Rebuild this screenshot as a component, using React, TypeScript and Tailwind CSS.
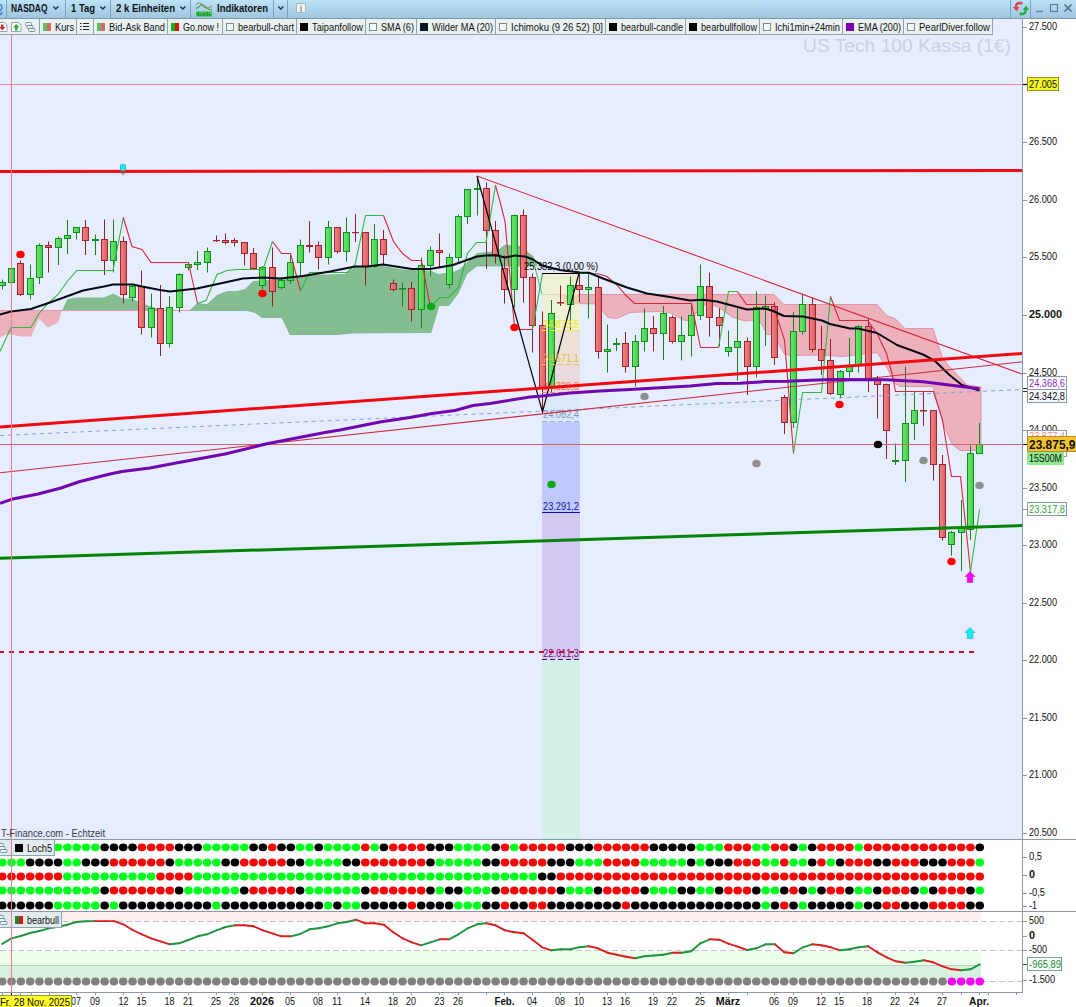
import React from "react";

const FONT = '"Liberation Sans", Arial, sans-serif';
const STEP = 9.31;
const barX = (i: number) => 2.2 + i * STEP;

/* Candles: direction, wick top, body top, body bottom, wick bottom */
type Candle = ["G" | "R", number, number, number, number];
const candles: Candle[] = [
  ["G", 279.5, 282.5, 285.5, 289.5], ["G", 265, 268.5, 282.5, 284.5], ["R", 260.5, 263.5, 294.5, 296],
  ["G", 264.5, 278.5, 294.5, 299.5], ["G", 243.5, 245.5, 277.5, 284], ["R", 241.5, 245.5, 247.5, 272.5],
  ["G", 236.5, 238.5, 247.5, 265], ["G", 220, 235.5, 238.5, 254], ["G", 227.5, 227.5, 232.5, 239.5],
  ["R", 220, 227.5, 240.5, 255], ["G", 234.5, 239.5, 240.5, 255], ["R", 219.5, 239.5, 260.5, 275],
  ["G", 219.5, 241.5, 260.5, 272.5], ["R", 236.5, 241.5, 294.5, 303.5], ["G", 284.5, 286.5, 297.5, 301.5],
  ["R", 270.5, 286.5, 327.5, 334.5], ["G", 293.5, 308.5, 327.5, 337.5], ["R", 285, 308.5, 343.5, 356],
  ["G", 296, 307.5, 343.5, 347.5], ["G", 273.5, 274.5, 307.5, 312.5], ["G", 263.5, 264.5, 267.5, 270.5],
  ["G", 251, 262.5, 264.5, 270], ["G", 247.5, 251.5, 262.5, 272.5], ["R", 235.5, 240.5, 240.5, 242],
  ["R", 233.5, 240.5, 242.5, 244.5], ["R", 238, 240.5, 242.5, 246.5], ["R", 242, 242.5, 253.5, 265.5],
  ["R", 248, 253.5, 268.5, 270], ["G", 266, 267.5, 285.5, 289], ["R", 247.5, 267.5, 291.5, 306.5],
  ["G", 278.5, 280.5, 287.5, 289.5], ["G", 254.5, 262.5, 280.5, 284], ["G", 239.5, 245.5, 262.5, 275.5],
  ["R", 221, 245.5, 246.5, 252.5], ["R", 241.5, 245.5, 257.5, 269.5], ["G", 221, 227.5, 257.5, 264.5],
  ["R", 227.5, 227.5, 251.5, 253.5], ["G", 217.5, 232.5, 251.5, 261.5], ["R", 214, 232.5, 232.5, 242],
  ["R", 232.5, 232.5, 266.5, 285.5], ["G", 224, 239.5, 266.5, 267.5], ["R", 230, 239.5, 254.5, 265],
  ["R", 279.5, 283.5, 289.5, 291.5], ["G", 282.5, 288.5, 289, 306.5], ["R", 282, 288.5, 309.5, 321.5],
  ["G", 257.5, 265.5, 309.5, 328.5], ["G", 246.5, 250.5, 265.5, 276.5], ["R", 233.5, 250.5, 252.5, 267.5],
  ["G", 253.5, 257.5, 284.5, 288.5], ["G", 214.5, 216.5, 257.5, 263.5], ["G", 189.5, 189.5, 216.5, 224],
  ["G", 176, 188.5, 189.5, 215.5], ["R", 182.5, 188.5, 230.5, 269], ["R", 221, 230.5, 254.5, 263.5],
  ["R", 255.5, 268.5, 289.5, 303.5], ["G", 214.5, 215.5, 289.5, 307.5], ["R", 209.5, 215.5, 277.5, 302.5],
  ["R", 273.5, 277.5, 325.5, 352.5], ["R", 311.5, 325.5, 387.5, 412], ["G", 300, 313.5, 386.5, 392],
  ["R", 285.5, 302.5, 303, 306], ["G", 276.5, 285.5, 304.5, 330], ["R", 273, 285.5, 289.5, 302.5],
  ["G", 272, 287.5, 289.5, 318.5], ["R", 276, 287.5, 351.5, 358.5], ["G", 324.5, 349.5, 351.5, 372.5],
  ["G", 338, 343.5, 344.5, 351], ["R", 332, 343.5, 366.5, 372.5], ["G", 335, 341.5, 366.5, 386.5],
  ["G", 308.5, 328.5, 341.5, 351.5], ["R", 316, 328.5, 333.5, 351.5], ["G", 306, 313.5, 333.5, 360],
  ["R", 315.5, 317.5, 341.5, 343.5], ["G", 316.5, 335.5, 341.5, 360.5], ["G", 303.5, 315.5, 335.5, 356.5],
  ["G", 264.5, 286.5, 315.5, 320], ["R", 272.5, 286.5, 317.5, 336.5], ["R", 308.5, 317.5, 325.5, 346.5],
  ["G", 330.5, 347.5, 351.5, 356.5], ["G", 308.5, 341.5, 347.5, 380.5], ["R", 337.5, 341.5, 366.5, 395],
  ["G", 291.5, 307.5, 366.5, 377.5], ["G", 295.5, 306.5, 308.5, 346], ["R", 302.5, 306.5, 357.5, 365],
  ["R", 395, 397.5, 422.5, 434], ["G", 312, 331.5, 422.5, 428], ["G", 293.5, 304.5, 331.5, 334.5],
  ["R", 297.5, 304.5, 349.5, 352.5], ["R", 326, 349.5, 360.5, 375], ["R", 339, 360.5, 393.5, 395],
  ["G", 370, 371.5, 394.5, 398.5], ["G", 338, 366.5, 371.5, 377.5], ["G", 325.5, 326.5, 364.5, 372.5],
  ["R", 318.5, 326.5, 379.5, 392], ["R", 376, 379.5, 384.5, 418.5], ["R", 383.5, 384.5, 430.5, 459],
  ["G", 443.5, 460.5, 461.5, 465], ["G", 366.5, 423.5, 460.5, 482], ["G", 392, 410.5, 423.5, 440],
  ["R", 392, 410.5, 411, 426], ["R", 410.5, 410.5, 464.5, 480.5], ["R", 455, 464.5, 537.5, 540.5],
  ["G", 531, 532.5, 544.5, 555.5], ["G", 500, 528.5, 532.5, 571], ["G", 445.5, 453.5, 529.5, 540],
  ["G", 423, 444.5, 453.5, 453.5],
];

/* Run-length coded signal rows of the Loch5 pane */
const signalRows: [number, string][] = [
  [847.3, "K6 G5 K4 R4 K3 G5 K2 R1 K2 G2 K1 G4 R1 G1 K1 R4 K3 G4 K1 R1 G1 R5 K3 R6 K5 G2 G1 R3 G2 R2 K1 G1 K1 R4 G1 R12 K1"],
  [862.5, "G3 K4 G2 K3 R6 K1 G5 K2 R5 K2 G4 K2 R7 K1 G5 K2 R5 K3 G3 R4 G5 K1 G1 K1 K2 R3 G2 R1 G2 K1 R1 G1 K1 R3 K2 R3 K3 R3 G1"],
  [876.5, "R7 G10 R4 G18 G19 K2 R46"],
  [890.5, "G11 K1 R7 K1 G6 K1 R5 K1 G6 K1 R6 K1 G1 K2 G3 K1 R6 K1 G3 K1 R4 K1 G3 K2 G2 K1 R3 K1 G2 K1 R1 K1 G1 K1 R2 K1 G2 K1 R3 K1 G1 K1 R3 K1 G1"],
  [905.5, "K6 G5 K1 G1 K10 G1 K11 G1 K1 G2 K5 R1 K4 G3 K2 R1 K2 R2 K8 R1 K9 K5 G1 K1 R1 K1 G1 K5 G1 K2 R2 K3 R4 K2"],
];
const signalColor: Record<string, string> = { G: "#00ff1e", R: "#f20a0a", K: "#000000" };
const expand = (s: string) =>
  s.split(" ").map((t) => t[0].repeat(Number(t.slice(1)))).join("").split("");

/* bearbull oscillator, one value per bar */
const osc = [
  943.9, 938.3, 936, 933, 931, 928.3, 926.7, 924.7, 922, 921.2, 921.1, 921.1, 921.1, 924.3, 930, 934.3, 938.3, 941.3, 944.3,
  943.3, 940, 936.3, 934.3, 930.3, 927, 925.3, 925.3, 926.3, 930.3, 933.3, 936.3, 936.3, 934, 929.3, 928.3, 926.3, 923.3,
  922, 919.7, 923.3, 923.3, 924.7, 932.3, 938.3, 942.3, 945.3, 942.3, 939.3, 939.3, 934.3, 928.3, 924.3, 923.3, 925.3,
  930.3, 932.3, 933.3, 940, 947.3, 950.3, 949.3, 949.2, 947.3, 946.3, 948.3, 952.7, 954.7, 956.7, 958.3, 956.3, 955.5,
  954.7, 952.7, 952.7, 951.3, 943.3, 939.3, 939.7, 943.7, 946.7, 950, 948.3, 944.3, 944.2, 952.3, 953.3, 947.3, 944.3,
  945.3, 947.3, 950.3, 949.3, 947.3, 946.3, 952.3, 957.3, 961.3, 962.7, 961.7, 960.3, 962.3, 966.3, 969.3, 970.3, 969.3,
  964.3,
];

const wilder =
  "0,314.5 11,311.5 31,309 50,302.5 83,290.5 104,286.5 113,284.5 133,284.5 142,286.5 160,290 170,291.5 197,288.5 220,283.5 243,278.5 263,277.5 280,278.5 303,276 330,271.5 355,266.5 367,266.5 383,264.5 412,269 430,269 453,265 467,260 477,256.5 488,255.2 497,255.5 505,257.5 515,255.5 525,256.5 533,259.5 542,265.5 560,270 580,272.5 589,272.8 603,278.5 627,287.5 647,293.5 667,296.5 690,300.5 703,299.7 717,301.5 747,309.5 765,308.5 773,311 784,316 803,316.5 822,320.5 830,324 850,328.5 858,328.5 877,333 897,345 923,354.5 935,361 950,375.5 962,385 979.5,390.5";
const ema =
  "0,503.3 11.5,499.3 38,494 61,488 80,481.5 110,474 122,471.5 150,468 176,463 225,454 268,443.5 325,432.5 340,430 380,422 410,417.5 432,413.5 455,410.5 473,405.5 490,403.5 530,397 542,396 570,393 600,391 630,389.5 690,386 717,383.5 740,383.3 765,381.6 787,381.2 830,379.4 887,379.7 923,381.7 979.5,388.7";

const follow: [string, string][] = [
  ["#2fb83c", "0,351.5 11,327.5 31,327.5 39,313.5 48,303.5 58,294.5 68,280.5 77,270.5 113,270.5 123.3,217.5"],
  ["#d8263a", "123.3,217.5 132,246.5 142,249.5 151,262.5 188.5,262.5 197.5,303.5"],
  ["#2fb83c", "197.5,303.5 206,300.5 217,274.5 227,270.5 237,269.5 263,269.5 272.5,241.5"],
  ["#d8263a", "272.5,241.5 281.5,253.5 290.5,253.5 300.5,291"],
  ["#2fb83c", "300.5,291 309.5,272.5 347,272.5 355,265 365.5,215.5 383.5,215.5"],
  ["#d8263a", "383.5,215.5 393.5,241.5 402.5,253.5 411.5,260.5 421.5,260.5 430,305"],
  ["#2fb83c", "431,306.5 439.5,297.5 448.5,297.5 458.5,287.5 467.5,253.5 476.5,242.5 486,242.5 495.5,185.5"],
  ["#d8263a", "495.5,185.5 500,201.5 505,221.5 508.5,260 514.5,327 514.5,329.5 532.5,329.5"],
  ["#2fb83c", "532.5,329.5 542.5,273.5 597,273.5"],
  ["#d8263a", "597,273.5 607,276.5 617,285 625.5,295 634.5,303.5 691.5,303.5 700.5,347.5 718.5,347.5"],
  ["#2fb83c", "718.5,347.5 728.5,291.5 737.5,291.5"],
  ["#d8263a", "737.5,291.5 746.5,304.5 774.5,304.5 777,317 784.5,340 788.5,390 793.5,453.5"],
  ["#2fb83c", "793.5,453.5 802.5,392.5 821.5,392.5 830.5,296.5"],
  ["#d8263a", "830.5,296.5 839.5,320.5 867.5,320.5 877,333.5 886.5,353.5 892,373.5 895.5,391.5 933.5,391.5 942.5,420 951.5,476.5 960.5,476.5 970.5,571.5"],
  ["#2fb83c", "970.5,571.5 979.5,509.5"],
];

const markers: [number, number, string][] = [
  [20.5, 254.5, "#f00"], [262.5, 293.5, "#f00"], [514.5, 327.5, "#f00"], [839.5, 404.5, "#f00"], [951.5, 561.5, "#f00"],
  [431, 306.5, "#0ba80f"], [551.5, 484.5, "#0ba80f"], [644.5, 396.5, "#909090"], [756.5, 463.5, "#909090"],
  [923.5, 460.5, "#909090"], [979.5, 485.5, "#909090"], [878, 444.5, "#000"],
];

function Label({ x, y, w, children, fill = "#111", size = 10, bold = false, anchor = "start" }: {
  x: number; y: number; w?: number; children: string; fill?: string; size?: number; bold?: boolean;
  anchor?: "start" | "middle";
}) {
  return (
    <text x={x} y={y} fill={fill} fontSize={size} fontWeight={bold ? 700 : 400} textAnchor={anchor}
      textLength={w} lengthAdjust="spacingAndGlyphs" fontFamily={FONT}>
      {children}
    </text>
  );
}

function PriceChart() {
  return (
    <svg className="block h-[804px] w-[1022px]" viewBox="0 35 1022 804">
      <rect x="0" y="35" width="1022" height="804" fill="#e6edff" />
      <Label x={803} y={52} w={208} size={19} fill="#cbd0e2">US Tech 100 Kassa (1€)</Label>

      {/* Ichimoku clouds */}
      <polygon fill="#edb0bd" points="0,337.5 5,335 11,334.5 20,336.5 31,336.5 39,318.5 48,327.5 58,322.5 62,310.5 0,310.5" />
      <polygon fill="#83bd90" points="62,310.5 67.5,299 77,297.5 104,297.5 113,293.5 123,298.5 132,298.5 140,302.5 150,306 162,310.5" />
      <polyline fill="none" stroke="#e29aa9" points="0,310.5 190,310.5" />
      <polygon fill="#83bd90" stroke="#6db27f" strokeWidth="0.7" points="190,310.5 197,303.5 207,304.5 217,295.5 227,291.5 237,291.5 245,289.5 253,281.5 280,279.5 303,275.5 345,274.5 355,267.5 383,266.5 403,270 432,271.5 438,274.5 453,272.5 460,269.5 470,260 477,253.5 497,251.5 505,245 520,246.5 533,256.5 537,266 477,266 467,273.5 458,293.5 449,305.5 439,305.5 431,332.5 353,333 337,334.5 290,334.5 282,317.5 262,317.5 255,312.5 247,310.5" />
      <polygon fill="#edb0bd" stroke="#dd8799" strokeWidth="0.8" points="542,294.5 774,294.5 784,304.5 877,304.5 887,316 895,318.5 905,328.5 933,328.5 942,356.5 948,365 967,385 981,387 981,450.5 960,450.5 952,444 943,423.5 933,386.5 900,386.5 895,383.5 887,368 877,352.5 843,356.5 820,355 790,355.5 784,353.5 774,335 767,334.5 761,323 755,320 745,321 733,317.5 717,306.5 707,303.5 697,311.5 691,321 683,320 670,312.5 657,311.5 630,312.5 617,318.5 608,317.5 600,308.5 598,304 572,303.5 563,298.5 555,294.5" />
      <polyline fill="none" stroke="#5cb570" points="533,260 542,294.5 556,294.5" />

      {/* Retracement zones */}
      <rect x="542" y="273" width="38" height="57" fill="#f1f1c6" fillOpacity=".75" />
      <rect x="542" y="330" width="38" height="34" fill="#eddccb" fillOpacity=".75" />
      <rect x="542" y="364" width="38" height="28" fill="#e8d6d8" fillOpacity=".85" />
      <rect x="542" y="392" width="38" height="30" fill="#dce8fb" />
      <rect x="542" y="422" width="38" height="90" fill="#bfc9fe" />
      <rect x="542" y="512" width="38" height="147" fill="#d4c8f4" />
      <rect x="542" y="659" width="38" height="180" fill="#d2f0e6" />
      <rect x="564" y="295" width="16" height="9" fill="#ecc9b4" fillOpacity=".8" />

      {/* Candles */}
      {candles.map(([dir, hi, top, bot, lo], i) => {
        const x = Math.round(barX(i) - 0.5) + 0.5;
        const edge = dir === "G" ? "#0f8f1e" : "#a3222c";
        return (
          <g key={i} stroke={edge}>
            <line x1={x} x2={x} y1={hi} y2={lo} stroke={dir === "G" ? "#17801f" : "#8f1f28"} />
            <rect x={x - 3} y={top} width="6" height={Math.max(0.2, bot - top)} fill={dir === "G" ? "url(#up)" : "url(#down)"} />
          </g>
        );
      })}
      <defs>
        <linearGradient id="up"><stop offset="0" stopColor="#74e574" /><stop offset="1" stopColor="#3fcf45" /></linearGradient>
        <linearGradient id="down"><stop offset="0" stopColor="#f08787" /><stop offset="1" stopColor="#d95d62" /></linearGradient>
      </defs>

      {follow.map(([c, p], i) => (
        <polyline key={i} fill="none" stroke={c} strokeWidth="1.1" points={p} />
      ))}
      <polyline fill="none" stroke="#060a14" strokeWidth="2" strokeLinejoin="round" points={wilder} />

      {/* Retracement figures */}
      <polyline fill="none" stroke="#000" strokeWidth="1.2" points="477,176 542.5,412 579,273" />
      <line x1="542" x2="580" y1="273.5" y2="273.5" stroke="#000" />
      <g strokeDasharray="5 3">
        <line x1="542" x2="580" y1="330.5" y2="330.5" stroke="#f3ec22" />
        <line x1="542" x2="580" y1="364.5" y2="364.5" stroke="#edbd50" />
        <line x1="542" x2="580" y1="392.5" y2="392.5" stroke="#fa7a55" />
        <line x1="542" x2="580" y1="421.5" y2="421.5" stroke="#9fb2dc" />
        <line x1="542" x2="580" y1="659.5" y2="659.5" stroke="#4b0a86" />
      </g>
      <line x1="542" x2="580" y1="512.5" y2="512.5" stroke="#1010a8" />
      <Label x={543} y={327.5} w={36} fill="#f1e712">24.873,5</Label>
      <Label x={543} y={361.5} w={36} fill="#edb43a">24.671,1</Label>
      <Label x={543} y={389.5} w={36} fill="#fb6b3c">24.329,8</Label>
      <Label x={543} y={418} w={36} fill="#8793b5">24.082,4</Label>
      <Label x={543} y={509.5} w={36} fill="#1a1aa8">23.291,2</Label>
      <Label x={543} y={656.5} w={36} fill="#80107e">22.611,3</Label>

      {/* Trend lines */}
      <line x1="0" x2="1022" y1="84.5" y2="84.5" stroke="#ec8a9a" />
      <line x1="0" x2="1022" y1="444.5" y2="444.5" stroke="#d3616e" />
      <line x1="0" y1="435.5" x2="1022" y2="389.5" stroke="#86a5dc" strokeDasharray="4 4" />
      <line x1="0" y1="472.8" x2="1022" y2="361.8" stroke="#cf2b3b" strokeWidth="1.1" />
      <line x1="477" y1="176" x2="1022" y2="374" stroke="#da2638" strokeWidth="1.1" />
      <line x1="0" y1="171.5" x2="1022" y2="170.5" stroke="#f00a14" strokeWidth="3" />
      <polyline fill="none" stroke="#7106b0" strokeWidth="3" strokeLinejoin="round" points={ema} />
      <line x1="0" y1="427" x2="1022" y2="353.5" stroke="#f00a10" strokeWidth="3" />
      <line x1="0" y1="558.3" x2="1022" y2="525.5" stroke="#048404" strokeWidth="3" />
      <line x1="-1" x2="979" y1="652" y2="652" stroke="#c81030" strokeWidth="2" strokeDasharray="5 5" />
      <Label x={524} y={270} w={74} fill="#000">25.382,3 (0,00 %)</Label>

      {/* Markers */}
      {markers.map(([x, y, c], i) => (
        <ellipse key={i} cx={x} cy={y} rx="4.2" ry="3.8" fill={c} />
      ))}
      <rect x="120.5" y="164.5" width="5" height="6" rx="1" fill="#1fe6ee" stroke="#29bfc8" />
      <path d="M120.5 173h5l-2.5 2.5z" fill="#77aeb0" />
      <path d="M970 571.5l5 5h-2.2v6h-5.600v-6h-2.200z" fill="#f00af0" stroke="#b80cc0" strokeWidth=".5" />
      <path d="M970 627.5l5 5h-2.2v6h-5.600v-6h-2.200z" fill="#12eef5" stroke="#2aa9b5" strokeWidth=".6" />
      <rect x="11" y="35" width="1" height="804" fill="#f0808e" />
      <Label x={1} y={837} w={104} fill="#333a48">T-Finance.com - Echtzeit</Label>
    </svg>
  );
}

function SignalPane() {
  return (
    <svg className="block h-[72px] w-[1022px]" viewBox="0 839 1022 72">
      <rect x="0" y="839" width="1022" height="72" fill="#fff" />
      <line x1="0" x2="1022" y1="839.5" y2="839.5" stroke="#8b98a8" />
      {signalRows.map(([y, s]) =>
        expand(s).map((c, i) => <ellipse key={`${y}-${i}`} cx={barX(i)} cy={y} rx="4.3" ry="3.9" fill={signalColor[c]} />)
      )}
      <rect x="11" y="840" width="1" height="71" fill="#e88590" />
    </svg>
  );
}

function OscillatorPane() {
  return (
    <svg className="block h-[82px] w-[1022px]" viewBox="0 911 1022 82">
      <rect x="0" y="911" width="1022" height="82" fill="#fff" />
      <rect x="0" y="912" width="981" height="9" fill="#ffeeee" />
      <rect x="0" y="951" width="981" height="14" fill="#ebffeb" />
      <rect x="0" y="965" width="981" height="14" fill="#d8f1df" />
      <line x1="0" x2="981" y1="965.5" y2="965.5" stroke="#b5d5bf" />
      <g stroke="#c4c4c4" strokeDasharray="6 3">
        <line x1="0" x2="1022" y1="921.5" y2="921.5" />
        <line x1="0" x2="1022" y1="950.5" y2="950.5" />
        <line x1="981" x2="1022" y1="981.5" y2="981.5" />
      </g>
      {osc.slice(1).map((y, i) => (
        <line key={i} x1={barX(i)} y1={osc[i]} x2={barX(i + 1)} y2={y} stroke={y >= osc[i] ? "#dd1f22" : "#1f9440"} strokeWidth="1.9" strokeLinecap="round" />
      ))}
      {osc.map((_, i) => (
        <ellipse key={i} cx={barX(i)} cy="981.5" rx="4.3" ry="3.9" fill={i > 101 ? "#f408f4" : "#808080"} />
      ))}
      <line x1="0" x2="1022" y1="911.5" y2="911.5" stroke="#8b98a8" />
      <line x1="0" x2="1022" y1="992.5" y2="992.5" stroke="#8b98a8" />
      <rect x="11" y="912" width="1" height="81" fill="#e88590" />
    </svg>
  );
}

const dates: [number, string, boolean?][] = [
  [76, "07"], [95, "09"], [123.5, "12"], [141.5, "15"], [169.5, "18"], [188, "21"], [216, "25"], [234, "28"],
  [262, "2026", true], [290, "05"], [318, "08"], [337, "11"], [365, "14"], [393, "18"], [411, "20"], [439.5, "23"],
  [458, "26"], [504.5, "Feb.", true], [532, "04"], [560, "08"], [579, "10"], [607, "13"], [625, "16"], [653, "19"],
  [672, "22"], [700, "25"], [728, "März", true], [774, "06"], [793, "09"], [821, "12"], [839, "15"], [867, "18"],
  [895, "22"], [914, "24"], [942, "27"], [979, "Apr.", true],
];

function DateAxis() {
  return (
    <svg className="block h-[14px] w-[1022px]" viewBox="0 993 1022 14">
      {[2, 20, 31, 49, 486, 747, 961, 988, 1016].map((x) => (
        <line key={x} x1={x + 0.5} x2={x + 0.5} y1="993" y2="995" stroke="#8b98a8" />
      ))}
      {dates.map(([x, t, b]) => (
        <g key={x}>
          <line x1={Math.floor(x) + 0.5} x2={Math.floor(x) + 0.5} y1="993" y2="995" stroke="#8b98a8" />
          <Label x={x} y={1005} w={t === "2026" ? 24 : t === "März" ? 24.5 : b ? 20 : 10} bold={!!b} anchor="middle" size={10}>{t}</Label>
        </g>
      ))}
      <line x1="11.5" x2="11.5" y1="993" y2="996" stroke="#000" />
      <rect x="-1" y="995.5" width="72.5" height="14" fill="#fbfb2a" stroke="#9a9a3a" />
      <Label x={0} y={1005.5} w={70}>Fr. 28 Nov. 2025</Label>
    </svg>
  );
}

const prices: [number, string, boolean?][] = [
  [27, "27.500"], [142, "26.500"], [200, "26.000"], [257, "25.500"], [315, "25.000", true], [373, "24.500"],
  [430, "24.000"], [488, "23.500"], [545, "23.000"], [603, "22.500"], [660, "22.000"], [718, "21.500"],
  [775, "21.000"], [833, "20.500"],
];
const lower: [number, string, number, boolean?][] = [
  [857, "0,5", 13], [875, "0", 6, true], [893, "-0,5", 16], [906, "-1", 8], [921, "500", 15], [936, "0", 6, true],
  [950, "-500", 18], [980, "-1.500", 26],
];

function ValueAxis() {
  return (
    <svg className="block h-[988px] w-[54px]" viewBox="1022 19 54 988">
      <rect x="1022" y="19" width="54" height="988" fill="#fff" />
      <line x1="1022.5" x2="1022.5" y1="19" y2="993" stroke="#8b98a8" />
      <line x1="1022" x2="1076" y1="839.5" y2="839.5" stroke="#8b98a8" />
      <line x1="1022" x2="1076" y1="911.5" y2="911.5" stroke="#8b98a8" />
      {prices.map(([y, t, b]) => (
        <g key={y}>
          <line x1="1023" x2="1027" y1={y + 0.5} y2={y + 0.5} stroke="#8b98a8" />
          <Label x={1029} y={y + 3.4} w={b ? 33 : 28} bold={b} size={b ? 10.5 : 10}>{t}</Label>
        </g>
      ))}
      {lower.map(([y, t, w, b]) => (
        <g key={y}>
          <line x1="1023" x2="1027" y1={y + 0.5} y2={y + 0.5} stroke="#8b98a8" />
          <Label x={1029} y={y + 3.4} w={w} bold={b} size={b ? 10.5 : 10}>{t}</Label>
        </g>
      ))}
      <line x1="1023" x2="1027" y1="84.5" y2="84.5" stroke="#000" strokeWidth="1.2" />
      <rect x="1027.5" y="77.5" width="31" height="13" fill="#f6f624" stroke="#8c9636" />
      <Label x={1029} y={88} w={28}>27.005</Label>

      <line x1="1023" x2="1027" y1="388.5" y2="388.5" stroke="#333" />
      <line x1="1023" x2="1027" y1="391.5" y2="391.5" stroke="#333" />
      <rect x="1027.5" y="376.5" width="39" height="13" fill="#fff" stroke="#8b98a8" />
      <Label x={1029} y={387} w={36} fill="#8a2ec0">24.368,6</Label>
      <rect x="1027.5" y="389.5" width="39" height="13" fill="#f5f8ff" stroke="#8b98a8" />
      <Label x={1029} y={400} w={36}>24.342,8</Label>

      <rect x="1027.5" y="430.5" width="39" height="26" fill="#fff" stroke="#8b98a8" />
      <Label x={1029} y={440} w={36} fill="#d98d92">23.877,4</Label>
      <rect x="1027.5" y="436.5" width="49" height="15" fill="#f4c22c" stroke="#b08d28" />
      <Label x={1029} y={448.5} w={46.5} bold size={12.5}>23.875,9</Label>
      <line x1="1023" x2="1027" y1="444.5" y2="444.5" stroke="#000" />
      <rect x="1027" y="452" width="37" height="13" fill="#90e890" />
      <Label x={1029} y={462} w={33}>15S00M</Label>

      <line x1="1023" x2="1027" y1="509.5" y2="509.5" stroke="#8b98a8" />
      <rect x="1027.5" y="502.5" width="39" height="13" fill="#f6fff6" stroke="#8b98a8" />
      <Label x={1029} y={513} w={36} fill="#39a84a">23.317,8</Label>

      <line x1="1023" x2="1027" y1="964.5" y2="964.5" stroke="#1a6b35" />
      <rect x="1027.5" y="957.5" width="34" height="13" fill="#f6fff6" stroke="#8b98a8" />
      <Label x={1029} y={968} w={32} fill="#1f8c3f">-965,89</Label>
    </svg>
  );
}

function TextRun({ w, children, bold = false }: { w: number; children: string; bold?: boolean }) {
  return (
    <svg className="block h-[14px] shrink-0 overflow-visible" width={w + 1} height="14">
      <Label x={0} y={10.5} w={w} bold={bold} size={bold ? 10.5 : 10}>{children}</Label>
    </svg>
  );
}

function Chevron() {
  return (
    <svg className="block h-2 w-2 shrink-0" viewBox="0 0 8 8">
      <path d="M1.3 2.6l2.5 2.4 2.5-2.4" fill="none" stroke="#22303c" strokeWidth="1.4" />
    </svg>
  );
}

function Cascade() {
  return (
    <svg className="block h-3 w-[11px] shrink-0" viewBox="0 0 11 12">
      <g fill="#eef5fa" stroke="#7895a8">
        <rect x=".5" y="1.5" width="6" height="3" rx="1" />
        <rect x="2" y="4.5" width="6" height="3" rx="1" />
        <rect x="3.5" y="7.5" width="6.5" height="3" rx="1" />
      </g>
    </svg>
  );
}

function DocArrow({ down = false }: { down?: boolean }) {
  return (
    <svg className="block h-3 w-[11px] shrink-0" viewBox="0 0 11 12">
      <path d="M.5 1.5h7l2.5 2.5v6.5h-9.5z" fill="#fff" stroke="#90a8a4" />
      {down
        ? <path d="M4 3.5h2.500v2.500h2l-3.200 3.500-3.300-3.500h2z" fill="#dd2e3c" />
        : <path d="M4 9.5h2.500v-3h2l-3.200-3.500-3.300 3.500h2z" fill="#2cab3c" />}
    </svg>
  );
}

type Swatch = "pair" | "vivid" | "deep" | "empty" | "black" | "dark" | "purple" | "list";
function Mark({ kind }: { kind: Swatch }) {
  if (kind === "list")
    return (
      <svg className="block h-[9px] w-[9px]" viewBox="0 0 9 9">
        <path d="M0 1.5h1.5M0 4.5h1.5M0 7.5h1.5M3 1.5h6M3 4.5h6M3 7.5h6" stroke="#222" strokeWidth="1.2" />
      </svg>
    );
  if (kind === "pair")
    return <span className="flex h-2 w-2 shrink-0"><i className="w-1 bg-[#66bc5e]" /><i className="w-1 bg-[#d76a66]" /></span>;
  if (kind === "vivid")
    return <span className="flex h-2 w-2 shrink-0"><i className="w-1 bg-[#12b41a]" /><i className="w-1 bg-[#dc1610]" /></span>;
  if (kind === "deep")
    return <span className="flex h-2 w-2 shrink-0"><i className="w-1 bg-[#1c8a3c]" /><i className="w-1 bg-[#dc1610]" /></span>;
  if (kind === "empty") return <span className="h-2 w-2 shrink-0 border border-[#7c8a92] bg-white/60" />;
  if (kind === "dark") return <span className="h-2 w-2 shrink-0 bg-[#06181c]" />;
  if (kind === "purple") return <span className="h-2 w-2 shrink-0 bg-[#7a00b8]" />;
  return <span className="h-2 w-2 shrink-0 bg-black" />;
}

const legend: { kind: Swatch; text: string; w: number; tw: number }[] = [
  { kind: "pair", text: "Kurs", w: 37, tw: 19 },
  { kind: "list", text: "", w: 17, tw: 0 },
  { kind: "pair", text: "Bid-Ask Band", w: 74, tw: 56 },
  { kind: "vivid", text: "Go.now !", w: 55, tw: 36 },
  { kind: "empty", text: "bearbull-chart", w: 74, tw: 56 },
  { kind: "black", text: "Taipanfollow", w: 69, tw: 51 },
  { kind: "empty", text: "SMA (6)", w: 51, tw: 33 },
  { kind: "dark", text: "Wilder MA (20)", w: 79, tw: 61 },
  { kind: "empty", text: "Ichimoku (9 26 52) [0]", w: 110, tw: 92 },
  { kind: "black", text: "bearbull-candle", w: 80, tw: 62 },
  { kind: "black", text: "bearbullfollow", w: 74, tw: 56 },
  { kind: "empty", text: "Ichi1min+24min", w: 83, tw: 65 },
  { kind: "purple", text: "EMA (200)", w: 61, tw: 43 },
  { kind: "empty", text: "PearlDiver.follow", w: 89, tw: 71 },
];

function Legend() {
  return (
    <div className="flex h-4 bg-[#e6edff]">
      <div className="flex w-10 items-center gap-[3px] border-r border-b border-[#8fa5ad] bg-[#e9f1f3]">
        <span className="-ml-[3px]"><DocArrow down /></span>
        <DocArrow />
        <Cascade />
      </div>
      {legend.map((l) => (
        <div key={l.text} style={{ width: l.w }}
          className="flex shrink-0 items-center gap-[4px] border-r border-b border-[#8fa5ad] bg-[#e9f1f3] pl-[3px]">
          <Mark kind={l.kind} />
          {l.text && <TextRun w={l.tw}>{l.text}</TextRun>}
        </div>
      ))}
    </div>
  );
}

function TopBar() {
  const cell = "flex h-full items-center justify-between border-r border-[#7ba3bb]";
  return (
    <header className="flex h-[19px] w-full items-center border-b border-[#7d98a9] bg-linear-to-b from-[#bce2f8] to-[#9fc6df]">
      <div className="flex h-[18px] w-full items-center">
        <div className="flex h-full w-[7px] items-center border-r border-[#7ba3bb]">
          <svg className="block h-4 w-[6px]" viewBox="0 0 6 16">
            <path d="M0 3.5q3 1 1.5 4.5L0 10M0 14l2.5-3" fill="none" stroke="#3478c4" strokeWidth="1.3" />
          </svg>
        </div>
        <div className={`${cell} w-[59px] pb-[3px] pl-[4px] pr-[5px]`}><TextRun bold w={36.5}>NASDAQ</TextRun><Chevron /></div>
        <div className={`${cell} w-[45px] pb-[3px] pl-[5px] pr-[3px]`}><TextRun bold w={24}>1 Tag</TextRun><Chevron /></div>
        <div className={`${cell} w-[80px] pb-[3px] pl-[5px] pr-[3px]`}><TextRun bold w={59}>2 k Einheiten</TextRun><Chevron /></div>
        <div className={`${cell} w-[83px] pb-[3px] pl-[5px] pr-[4px]`}>
          <svg className="mt-[3px] block h-4 w-4 shrink-0" viewBox="0 0 16 16">
            <rect x="0" y="10.5" width="16" height="5" fill="#35c04a" />
            <path d="M1 12h1.5v3M5 13v2M8 12v3M11 11v4M13.5 13v2" stroke="#16802a" fill="none" />
            <path d="M0 4c2-3 4-3 6 0s5 5 10 1" fill="none" stroke="#b08468" strokeWidth="1.1" />
            <path d="M0 7c3 1 4-5 7-3s5 5 9 5" fill="none" stroke="#35a04a" strokeWidth="1.1" />
          </svg>
          <TextRun bold w={51}>Indikatoren</TextRun>
        </div>
        <div className="flex h-full w-[14px] items-center justify-center border-r border-[#7ba3bb] pb-[3px]"><Chevron /></div>
        <div className="flex flex-1 pb-[2px] pl-2">
          <svg className="block h-[10px] w-[10px]" viewBox="0 0 10 10">
            <rect x=".5" y=".5" width="9" height="9" fill="#f4f4f4" stroke="#a9b6be" />
            <path d="M5 2v1.2M5 4.2v3.8M4 4.5h1M4 8h2.2" stroke="#8d8780" strokeWidth="1.2" />
          </svg>
        </div>
        <div className="flex h-full w-[21px] items-center justify-center border-x border-[#7ba3bb] pb-[2px]">
          <svg className="block h-[15px] w-[16px]" viewBox="0 0 16 15">
            <path d="M7.5 2C4 1.5 2.5 4 3 7" fill="none" stroke="#e2424a" strokeWidth="2.4" />
            <path d="M0 6h6.5l-3 4.5z" fill="#e2424a" />
            <path d="M8 13c4 .5 5-2 4.700-5" fill="none" stroke="#28ad3e" strokeWidth="2.4" />
            <path d="M9.500 9h6.500l-3-4.500z" fill="#28ad3e" />
            <path d="M7.500 0v4.500l2.500-2.300z" fill="#e2424a" />
            <path d="M8.500 10.500v4.500l-2.500-2.300z" fill="#28ad3e" />
          </svg>
        </div>
        <svg className="mb-[2px] block h-3 w-[45px]" viewBox="1031 2 45 12">
          <path d="M1036 11.5h7" stroke="#5f7f95" strokeWidth="1.4" fill="none" />
          <rect x="1050.5" y="4.5" width="7" height="7" fill="none" stroke="#5f7f95" strokeWidth="1.2" />
          <path d="M1064.5 4.5l7 7M1071.5 4.5l-7 7" stroke="#4f6c80" strokeWidth="1.5" />
        </svg>
      </div>
    </header>
  );
}

function PaneTitle({ kind, text, w, tw }: { kind: Swatch; text: string; w: number; tw: number }) {
  return (
    <div className="absolute left-0 top-px flex h-4">
      <div className="flex w-3 items-center border-r border-b border-r-[#e88590] border-b-[#8fa5ad] bg-[#dfe8ec]"><span className="-ml-[3px]"><Cascade /></span></div>
      <div style={{ width: w }} className="flex items-center gap-[4px] border-r border-b border-[#8fa5ad] bg-[#e2ebee] pl-[3px]">
        <Mark kind={kind} />
        <TextRun w={tw}>{text}</TextRun>
      </div>
    </div>
  );
}

export default function App() {
  return (
    <div className="flex h-[1007px] w-[1076px] flex-col overflow-hidden bg-white font-['Liberation_Sans',Arial,sans-serif]">
      <TopBar />
      <main className="flex flex-1">
        <section className="flex w-[1022px] flex-col">
          <Legend />
          <PriceChart />
          <div className="relative">
            <SignalPane />
            <PaneTitle kind="black" text="Loch5" w={43} tw={25} />
          </div>
          <div className="relative">
            <OscillatorPane />
            <PaneTitle kind="deep" text="bearbull" w={50} tw={32} />
          </div>
          <DateAxis />
        </section>
        <aside className="w-[54px]"><ValueAxis /></aside>
      </main>
    </div>
  );
}
